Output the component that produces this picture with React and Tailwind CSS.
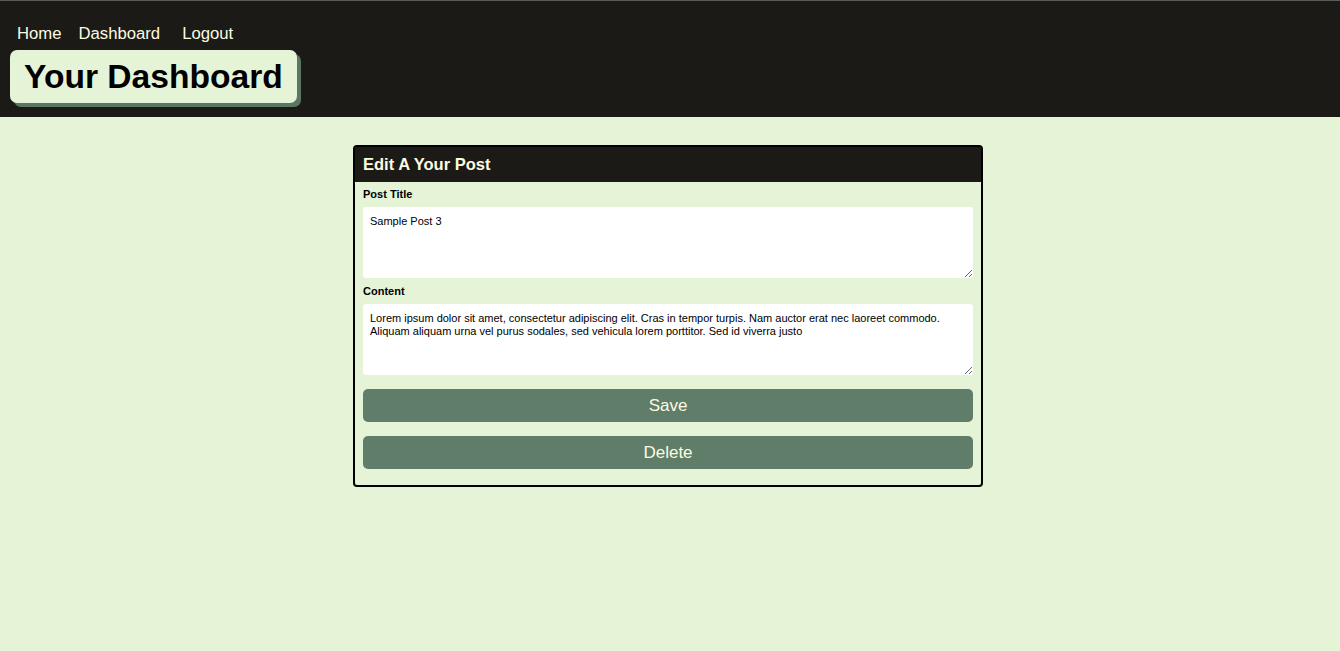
import React from 'react'

const sample = 'Lorem ipsum dolor sit amet, consectetur adipiscing elit. Cras in tempor turpis. Nam auctor erat nec laoreet commodo. Aliquam aliquam urna vel purus sodales, sed vehicula lorem porttitor. Sed id viverra justo'

const Header = () => (
  <header className="bg-[#1b1a16] border-t border-[#5c5c5c] pt-[23px] pb-[14px]">
    <nav className="flex items-center pl-[17px] text-[16.7px] leading-[20px] text-[#fdfbe1]">
      <a href="#" className="mr-[17px]">Home</a>
      <a href="#" className="mr-[22px]">Dashboard</a>
      <a href="#">Logout</a>
    </nav>
    <div className="ml-[10px] mt-[6px] inline-block rounded-[7px] bg-[#e5f3d7] px-[14px] py-[8px] shadow-[4px_4px_0_#5b7663]">
      <h1 className="text-[33.6px] font-bold leading-[37px] text-black">Your Dashboard</h1>
    </div>
  </header>
)

const Field = ({ label, value, className }) => (
  <div className={className}>
    <label className="block text-[11px] font-bold leading-[13px] text-black mb-[6px]">{label}</label>
    <textarea
      defaultValue={value}
      className="block w-full h-[71px] rounded-[3px] bg-white px-[7px] pt-[8px] pb-[4px] text-[11px] leading-[13px] text-black outline-none"
    />
  </div>
)

const App = () => {
  return (
    <div className="min-h-[651px] bg-[#e5f3d7] font-['Liberation_Sans',Arial,sans-serif]">
      <Header />
      <main className="pt-[28px] pr-[4px]">
        <div className="w-[630px] mx-auto rounded-[4px] border-2 border-black bg-[#e5f3d7]">
          <div className="bg-[#1b1a16] px-[8px] h-[35px] flex items-center">
            <h3 className="text-[16.5px] font-bold text-[#fdfbe1]">Edit A Your Post</h3>
          </div>
          <form className="px-[8px] pt-[6px] pb-[16px]" onSubmit={(e) => e.preventDefault()}>
            <Field label="Post Title" value="Sample Post 3" />
            <Field label="Content" value={sample} className="mt-[7px]" />
            <button className="mt-[14px] block w-full h-[33px] rounded-[5px] bg-[#607d6a] text-[17px] text-[#fdfbe1]">
              Save
            </button>
            <button type="button" className="mt-[14px] block w-full h-[33px] rounded-[5px] bg-[#607d6a] text-[17px] text-[#fdfbe1]">
              Delete
            </button>
          </form>
        </div>
      </main>
    </div>
  )
}

export default App
